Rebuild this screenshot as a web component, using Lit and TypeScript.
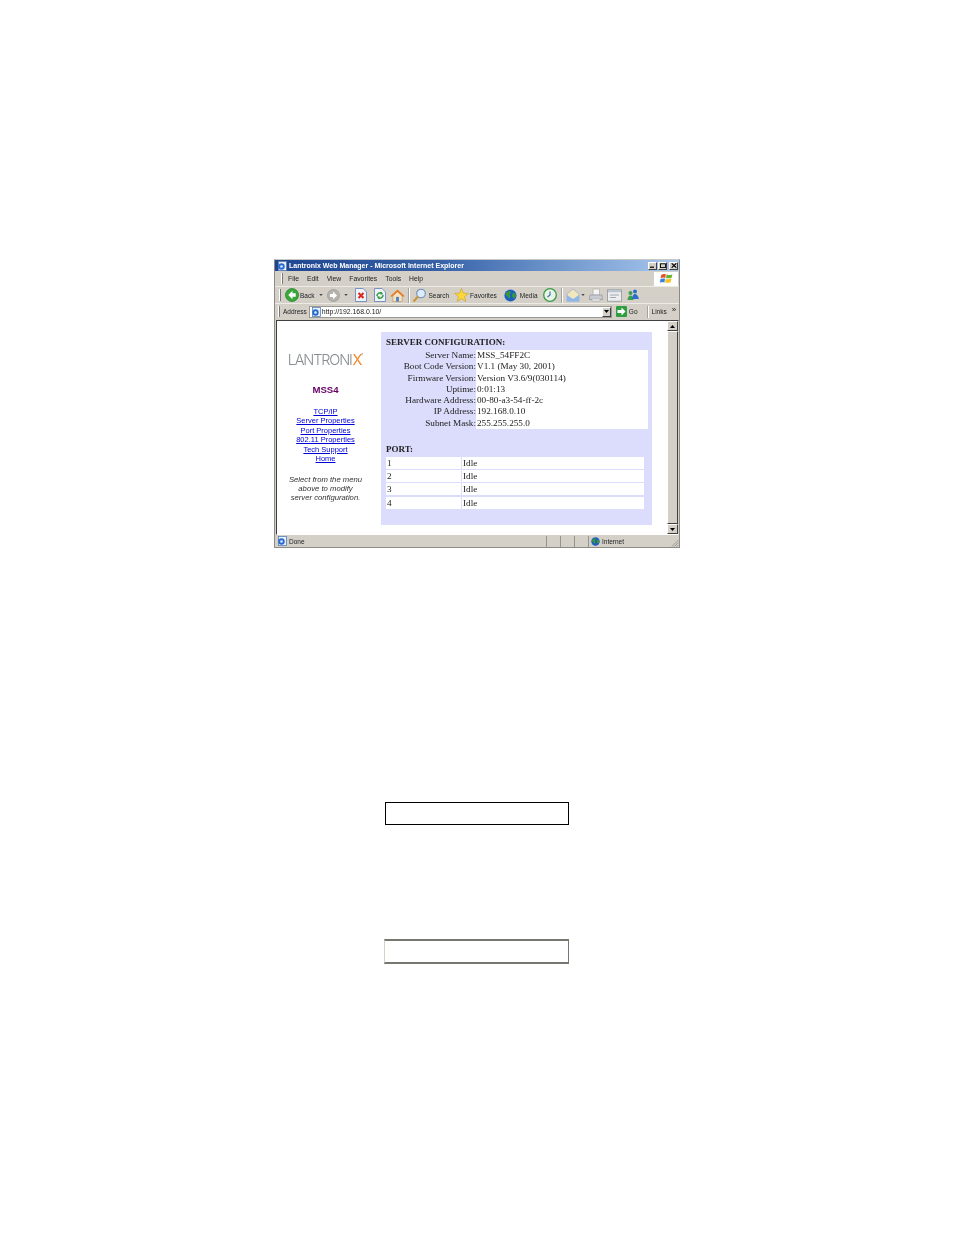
import { LitElement, html, css } from "lit";
import { customElement } from "lit/decorators.js";

const globe = (s = 12) => html`<svg width=${s} height=${s} viewBox="0 0 12 12"><circle cx="6" cy="6" r="5.6" fill="#1c5fc0"/><path d="M2 3.5 5 1.5 6.5 3 5 5 6 7 4.5 9.5 3.5 7 1.5 5.5ZM8 4 10.5 4 11 7 9 9 7.5 6.5Z" fill="#3c9a32"/></svg>`;
const ieDoc = html`<svg width="10" height="10" viewBox="0 0 10 10"><rect x="1.5" y="0.5" width="8" height="9" fill="#e8f0fb" stroke="#5a7fb5" stroke-width=".8"/><circle cx="4.5" cy="5.5" r="3.2" fill="#2a6bd0"/><circle cx="4.5" cy="5.5" r="1.3" fill="#dfeaf8"/></svg>`;
const arrowCircle = (fill: string, rim: string, dir: "l" | "r", s = 14) => html`<svg width=${s} height=${s} viewBox="0 0 15 15"><circle cx="7.5" cy="7.5" r="7" fill=${fill} stroke=${rim} stroke-width=".7"/><path d=${dir === "l" ? "M8 3 3.5 7.5 8 12V9.3H11.5V5.7H8Z" : "M7 3 11.5 7.5 7 12V9.3H3.5V5.7H7Z"} fill="#fff"/></svg>`;
const caret = (cls: string) => html`<svg class=${cls} width="4" height="2" viewBox="0 0 5 3"><path d="M0 0H5L2.5 3Z" fill="#444"/></svg>`;

@customElement("app-root")
export class AppRoot extends LitElement {
  static styles = css`
    :host { display: block; width: 954px; height: 1235px; background: #fff; overflow: hidden; font-family: "Liberation Sans", Arial, sans-serif; }
    .page { display: flex; flex-direction: column; padding-top: 259px; }
    .win { margin-left: 274px; width: 406px; height: 289px; box-sizing: border-box; background: #d4d0c8; border: 1px solid #8c8c86; border-top-color: #c8c8c4; display: flex; flex-direction: column; filter: blur(.35px); color: #222; font-size: 6.5px; }
    .title { height: 11px; flex: none; display: flex; align-items: center; padding: 0 1px 0 2px; gap: 2px; background: linear-gradient(90deg, #1f4590 0%, #3561a8 40%, #6f96cc 70%, #a9c8ee 100%); color: #fff; font-weight: bold; font-size: 7px; }
    .title span { flex: 1; white-space: nowrap; }
    .wbtns { display: flex; }
    .wbtn { width: 9px; height: 8px; box-sizing: border-box; background: #d4d0c8; border: 1px solid; border-color: #fff #404040 #404040 #fff; display: flex; align-items: center; justify-content: center; }
    .wbtn + .wbtn { margin-left: 1px; }
    .wbtn:last-child { margin-left: 2px; }
    .menu { height: 15px; flex: none; display: flex; align-items: center; border-bottom: 1px solid #ecebe6; font-size: 6.8px; }
    .grip { width: 2px; align-self: stretch; margin: 2px 0; flex: none; background: #fff; border-right: 1px solid #777; box-sizing: border-box; }
    .menu .grip { margin-left: 6px; }
    .menu-items { display: flex; gap: 8px; margin-left: 5px; flex: 1; }
    .flag { width: 24px; height: 14px; background: #fff; display: flex; align-items: center; justify-content: center; margin-right: 1px; }
    .tools { height: 16px; flex: none; display: flex; align-items: center; border-bottom: 1px solid #ecebe6; }
    .tools .grip { margin-left: 4px; margin-right: 4px; }
    .tools svg { flex: none; }
    .sep { width: 2px; height: 15px; flex: none; background: #fff; border-left: 1px solid #a5a29a; box-sizing: border-box; }
    .t { margin-left: 1px; white-space: nowrap; }
    .c-back { margin-left: 5px; }
    .fwd { margin-left: 4px; display: flex; }
    .c-fwd { margin-left: 4px; }
    .stop { margin-left: 7px; }
    .refresh { margin-left: 7px; }
    .home { margin-left: 4px; }
    .s1 { margin-left: 3px; }
    .search { margin-left: 2px; }
    .fav { margin-left: 5px; }
    .media { margin-left: 7px; display: flex; }
    .media-t { margin-left: 3px; }
    .hist { margin-left: 5px; }
    .s2 { margin-left: 4px; }
    .mail { margin-left: 3px; }
    .c-mail { margin-left: 1px; }
    .print { margin-left: 4px; }
    .edit { margin-left: 4px; }
    .msn { margin-left: 4px; }
    .addr { height: 15px; flex: none; display: flex; align-items: center; }
    .addr .grip { margin-left: 3px; margin-right: 3px; }
    .field { width: 303px; height: 12px; margin-left: 2px; box-sizing: border-box; background: #fff; border: 1px solid #9a9a94; display: flex; align-items: center; padding-left: 1px; gap: 1px; flex: none; }
    .field .url { flex: 1; font-size: 6.9px; }
    .dd { width: 9px; height: 10px; box-sizing: border-box; background: #d4d0c8; border: 1px solid; border-color: #fff #404040 #404040 #fff; display: flex; align-items: center; justify-content: center; }
    .go { margin-left: 4px; }
    .go-t { margin-left: 2px; }
    .addr .s3 { margin-left: 9px; height: 12px; }
    .links { margin-left: 3px; }
    .more { margin-left: 5px; font-size: 8px; line-height: 8px; margin-top: -3px; }
    .view { flex: 1; min-height: 0; margin: 1px 0 0 1px; display: flex; border: 1px solid; border-color: #404040 #d4d0c8 #fff #404040; background: #fff; }
    .doc { flex: 1; display: flex; min-width: 0; }
    .side { width: 97px; flex: none; margin-right: 7px; display: flex; flex-direction: column; align-items: center; padding-top: 31px; box-sizing: border-box; }
    .logo { font-family: "Inter", "Open Sans", "Liberation Sans", sans-serif; font-weight: 300; font-size: 14.5px; line-height: 15px; letter-spacing: -1.15px; color: #878d90; white-space: nowrap; }
    .logo b { color: #f0892a; font-weight: 400; margin-left: .8px; }
    .logo sup { font-size: 3px; letter-spacing: 0; vertical-align: 9px; line-height: 0; }
    .model { margin-top: 17px; font-size: 9.6px; line-height: 11px; font-weight: bold; color: #660066; }
    .nav { margin-top: 12px; display: flex; flex-direction: column; align-items: center; }
    .nav a { color: #0000d8; text-decoration: underline; font-size: 7.5px; line-height: 9.45px; white-space: nowrap; }
    .note { margin: 11px 0 0; text-align: center; font-style: italic; font-size: 7.7px; line-height: 9.3px; color: #333; white-space: nowrap; }
    .panel { width: 271px; margin-top: 11px; height: 193px; flex: none; box-sizing: border-box; background: #dcdcfc; padding: 5px 0 0 5px; font-family: "Liberation Serif", "Times New Roman", serif; font-size: 9.2px; color: #222; }
    .h { font-weight: bold; line-height: 10px; font-size: 9px; }
    .cfg { display: grid; grid-template-columns: 90px 172px; margin-top: 3px; }
    .cfg .k { text-align: right; line-height: 11.25px; white-space: nowrap; }
    .cfg .v { background: #fff; line-height: 11.25px; white-space: nowrap; padding-left: 1px; }
    .port-h { font-weight: bold; margin-top: 15px; line-height: 10px; font-size: 9px; }
    .ports { display: grid; grid-template-columns: 75px 182px; column-gap: 1px; row-gap: 1.33px; margin-top: 3px; }
    .ports div { background: #fff; height: 12px; line-height: 12px; padding-left: 1px; }
    .scroll { width: 11px; flex: none; background: #ecebe6; display: flex; flex-direction: column; border-left: 1px solid #fff; }
    .sb { height: 10px; flex: none; box-sizing: border-box; background: #d4d0c8; border: 1px solid; border-color: #fff #404040 #404040 #fff; display: flex; align-items: center; justify-content: center; }
    .thumb { flex: 1; box-sizing: border-box; background: #d4d0c8; border: 1px solid; border-color: #fff #404040 #404040 #fff; }
    .status { height: 12px; flex: none; display: flex; align-items: center; padding-left: 2px; position: relative; }
    .status .done { margin-left: 2px; flex: 1; }
    .cell { width: 14px; height: 11px; box-sizing: border-box; border-left: 1px solid #96948c; flex: none; }
    .zone { width: 91px; height: 11px; box-sizing: border-box; border-left: 1px solid #96948c; display: flex; align-items: center; gap: 2px; padding-left: 2px; flex: none; }
    .rz { position: absolute; right: 0; bottom: 0; }
    .box1 { margin: 254px 0 0 385px; width: 184px; height: 23px; box-sizing: border-box; border: 1px solid #000; background: #fff; flex: none; }
    .box2 { margin: 114px 0 0 384px; width: 185px; height: 25px; box-sizing: border-box; border: 1px solid; border-color: #77766f #77766f #77766f #d4d0c8; border-top-width: 2px; border-bottom-width: 2px; background: #fff; flex: none; }
  `;

  render() {
    const cfg = [
      ["Server Name:", "MSS_54FF2C"],
      ["Boot Code Version:", "V1.1 (May 30, 2001)"],
      ["Firmware Version:", "Version V3.6/9(030114)"],
      ["Uptime:", "0:01:13"],
      ["Hardware Address:", "00-80-a3-54-ff-2c"],
      ["IP Address:", "192.168.0.10"],
      ["Subnet Mask:", "255.255.255.0"],
    ];
    const nav = ["TCP/IP", "Server Properties", "Port Properties", "802.11 Properties", "Tech Support", "Home"];
    return html`<div class="page">
      <div class="win">
        <div class="title">${ieDoc}<span>Lantronix Web Manager - Microsoft Internet Explorer</span>
          <div class="wbtns">
            <div class="wbtn"><svg width="5" height="5" viewBox="0 0 5 5"><rect y="3.6" width="4" height="1.2" fill="#000"/></svg></div>
            <div class="wbtn"><svg width="6" height="5" viewBox="0 0 6 5"><rect x=".5" y=".8" width="5" height="3.8" fill="none" stroke="#000" stroke-width=".9"/></svg></div>
            <div class="wbtn"><svg width="6" height="5" viewBox="0 0 6 5"><path d="M.7.3 5.3 4.7M5.3.3.7 4.7" stroke="#000" stroke-width="1.1"/></svg></div>
          </div>
        </div>
        <div class="menu"><div class="grip"></div>
          <div class="menu-items"><span>File</span><span>Edit</span><span>View</span><span>Favorites</span><span>Tools</span><span>Help</span></div>
          <div class="flag"><svg width="13" height="13" viewBox="0 0 11 11"><path d="M1 2.5Q3 1 5 2L4.4 5Q2.6 4.2.5 5.3Z" fill="#e8502a"/><path d="M5.6 2.2Q8 3 10.5 1.8L9.8 4.8Q7.5 5.8 5 5Z" fill="#69b52e"/><path d="M.4 6Q2.4 5 4.3 5.8L3.7 8.8Q2 8 0 9Z" fill="#2f7fe0"/><path d="M4.9 5.9Q7.2 6.6 9.7 5.5L9 8.6Q6.8 9.5 4.3 8.8Z" fill="#f5c21f"/></svg></div>
        </div>
        <div class="tools"><div class="grip"></div>
          ${arrowCircle("#39a83a", "#1f7a24", "l")}<span class="t">Back</span>${caret("c-back")}
          <span class="fwd">${arrowCircle("#b4b4ac", "#94948c", "r", 13)}</span>${caret("c-fwd")}
          <svg class="stop" width="12" height="14" viewBox="0 0 12 14"><path d="M.5.5H8L11.5 4V13.5H.5Z" fill="#eef3fb" stroke="#7a93bd"/><path d="M3.5 5 8.5 10M8.5 5 3.5 10" stroke="#d8281c" stroke-width="2"/></svg>
          <svg class="refresh" width="12" height="14" viewBox="0 0 12 14"><path d="M.5.5H8L11.5 4V13.5H.5Z" fill="#eef3fb" stroke="#7a93bd"/><path d="M3 8a3 3 0 0 1 5-2.4M9 7a3 3 0 0 1-5 2.4" fill="none" stroke="#2f9a3a" stroke-width="1.5"/><path d="M7 3.5 9.3 6.3 6.3 6.5ZM5 11 2.7 8.6 5.6 8.2Z" fill="#2f9a3a"/></svg>
          <svg class="home" width="15" height="15" viewBox="0 0 16 15"><path d="M3 7V14H13V7L8 2.5Z" fill="#f3e3c0" stroke="#b08a50" stroke-width=".6"/><path d="M.5 8 8 1 15.5 8 14 9.2 8 3.8 2 9.2Z" fill="#e87a26"/><rect x="6.5" y="9" width="3" height="5" fill="#4f7fc4"/></svg>
          <div class="sep s1"></div>
          <svg class="search" width="15" height="15" viewBox="0 0 15 15"><circle cx="9" cy="5.5" r="4.3" fill="#dcecfb" stroke="#6d8fb8" stroke-width="1.1"/><path d="M6 8.5 1.5 13.5" stroke="#c9963a" stroke-width="2.2"/></svg><span class="t">Search</span>
          <svg class="fav" width="15" height="14" viewBox="0 0 16 15"><path d="M8 .6 10 5.5 15.4 5.8 11.2 9.2 12.6 14.4 8 11.5 3.4 14.4 4.8 9.2.6 5.8 6 5.5Z" fill="#fbd73a" stroke="#c99a1c" stroke-width=".6"/></svg><span class="t">Favorites</span>
          <span class="media">${globe(13)}</span><span class="t media-t">Media</span>
          <svg class="hist" width="14" height="14" viewBox="0 0 14 14"><circle cx="7" cy="7" r="6.3" fill="#e9f3e6" stroke="#3a9a48" stroke-width="1.3"/><path d="M7 3.5V7L4.5 9" fill="none" stroke="#2b6cb0" stroke-width="1.1"/></svg>
          <div class="sep s2"></div>
          <svg class="mail" width="14" height="14" viewBox="0 0 14 14"><path d="M1 6 7 1 13 6V13H1Z" fill="#f2e6bd" stroke="#9aa9c8" stroke-width=".7"/><path d="M1 7 7 11 13 7V13.5H1Z" fill="#8fb6e8"/></svg>${caret("c-mail")}
          <svg class="print" width="14" height="14" viewBox="0 0 14 14"><rect x="4" y="1" width="6.5" height="6" fill="#f4f4f2" stroke="#a4a4a4" stroke-width=".6"/><path d="M1 7H13L13.5 11.5H.5Z" fill="#c8ccd4" stroke="#84888f" stroke-width=".6"/><rect x="3" y="11" width="8" height="2" fill="#eee" stroke="#a4a4a4" stroke-width=".5"/></svg>
          <svg class="edit" width="15" height="13" viewBox="0 0 15 13"><rect x=".5" y=".8" width="14" height="11.4" fill="#eceef0" stroke="#8f959c" stroke-width=".8"/><rect x="1" y="1.2" width="13" height="2" fill="#b9c2cc"/><path d="M3 6H12M3 8.5H9" stroke="#8f959c" stroke-width=".8"/></svg>
          <svg class="msn" width="14" height="14" viewBox="0 0 14 14"><circle cx="4.5" cy="5" r="2" fill="#3aa04a"/><path d="M1.5 12Q2 7.5 4.5 7.5T7.5 12Z" fill="#3aa04a"/><circle cx="9" cy="3.5" r="2" fill="#2c6fc8"/><path d="M6 11Q6.5 6 9 6T13 11Z" fill="#2c6fc8"/></svg>
        </div>
        <div class="addr"><div class="grip"></div><span>Address</span>
          <div class="field">${ieDoc}<span class="url">http://192.168.0.10/</span>
            <div class="dd"><svg width="5" height="3" viewBox="0 0 5 3"><path d="M0 0H5L2.5 3Z" fill="#000"/></svg></div></div>
          <svg class="go" width="11" height="11" viewBox="0 0 11 11"><rect width="11" height="11" rx="1" fill="#2f9e3e"/><path d="M5.5 1.5 9.5 5.5 5.5 9.5V7H1.5V4H5.5Z" fill="#fff"/></svg><span class="go-t">Go</span>
          <div class="sep s3"></div><span class="links">Links</span><span class="more">»</span>
        </div>
        <div class="view">
          <div class="doc">
            <div class="side">
              <div class="logo">LANTRONI<b>X</b><sup>®</sup></div>
              <div class="model">MSS4</div>
              <nav class="nav">${nav.map((n) => html`<a href="#">${n}</a>`)}</nav>
              <p class="note">Select from the menu<br />above to modify<br />server configuration.</p>
            </div>
            <div class="panel">
              <div class="h">SERVER CONFIGURATION:</div>
              <div class="cfg">
                ${cfg.map(([k, v]) => html`<div class="k">${k}</div><div class="v">${v}</div>`)}
              </div>
              <div class="port-h">PORT:</div>
              <div class="ports">
                ${[1, 2, 3, 4].map((n) => html`<div>${n}</div><div>Idle</div>`)}
              </div>
            </div>
          </div>
          <div class="scroll">
            <div class="sb"><svg width="5" height="3" viewBox="0 0 5 3"><path d="M0 3H5L2.5 0Z" fill="#000"/></svg></div>
            <div class="thumb"></div>
            <div class="sb"><svg width="5" height="3" viewBox="0 0 5 3"><path d="M0 0H5L2.5 3Z" fill="#000"/></svg></div>
          </div>
        </div>
        <div class="status">${ieDoc}<span class="done">Done</span>
          <div class="cell"></div><div class="cell"></div><div class="cell"></div>
          <div class="zone">${globe(9)}<span>Internet</span></div>
          <svg class="rz" width="8" height="8" viewBox="0 0 8 8"><path d="M7.5 1 1 7.5M7.5 3.5 3.5 7.5M7.5 6 6 7.5" stroke="#8a8880" stroke-width=".8"/></svg>
        </div>
      </div>
      <div class="box1"></div>
      <div class="box2"></div>
    </div>`;
  }
}
